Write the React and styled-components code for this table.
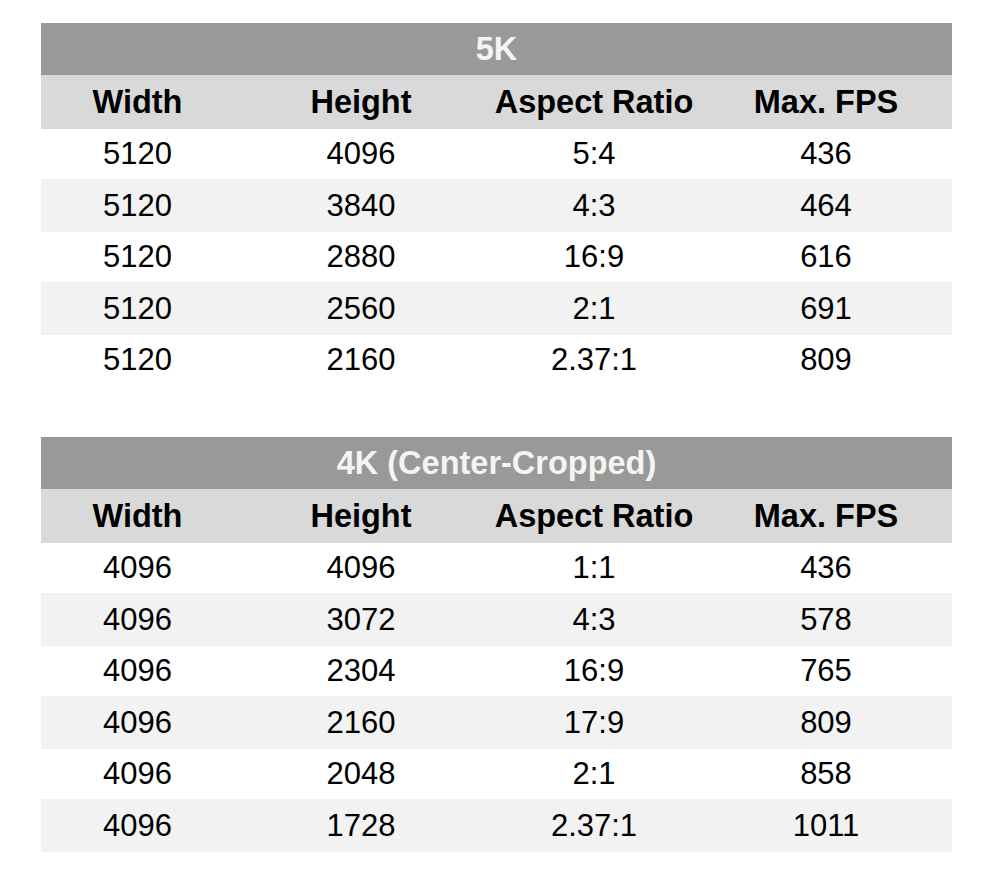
import React from "react";
import styled, { createGlobalStyle } from "styled-components";

const Global = createGlobalStyle`
  html, body { margin: 0; padding: 0; background: #ffffff; }
  body { font-family: "Liberation Sans", Arial, sans-serif; }
`;

const Page = styled.div`
  width: 984px;
  padding: 23px 0 0 41px;
  box-sizing: border-box;
  display: flex;
  flex-direction: column;
  gap: 52px;
`;

const Table = styled.div`
  width: 911px;
  display: grid;
  grid-template-columns: 193px 254px 212px 252px;
`;

const Title = styled.div`
  grid-column: 1 / -1;
  height: 52px;
  background: #999999;
  color: #f4f4f4;
  font-weight: 700;
  font-size: 32.5px;
  display: flex;
  align-items: center;
  justify-content: center;
`;

const Cell = styled.div`
  height: ${(p) => p.$h}px;
  background: ${(p) => p.$bg};
  color: #000;
  font-size: ${(p) => (p.$bold ? "32.5px" : "31px")};
  font-weight: ${(p) => (p.$bold ? 700 : 400)};
  display: flex;
  align-items: center;
  justify-content: center;
  white-space: nowrap;
`;

const headers = ["Width", "Height", "Aspect Ratio", "Max. FPS"];

const tables = [
  {
    title: "5K",
    rows: [
      ["5120", "4096", "5:4", "436"],
      ["5120", "3840", "4:3", "464"],
      ["5120", "2880", "16:9", "616"],
      ["5120", "2560", "2:1", "691"],
      ["5120", "2160", "2.37:1", "809"],
    ],
  },
  {
    title: "4K (Center-Cropped)",
    rows: [
      ["4096", "4096", "1:1", "436"],
      ["4096", "3072", "4:3", "578"],
      ["4096", "2304", "16:9", "765"],
      ["4096", "2160", "17:9", "809"],
      ["4096", "2048", "2:1", "858"],
      ["4096", "1728", "2.37:1", "1011"],
    ],
  },
];

function ResTable({ title, rows }) {
  return (
    <Table>
      <Title>{title}</Title>
      {headers.map((h) => (
        <Cell key={h} $h={54} $bg="#d9d9d9" $bold>
          {h}
        </Cell>
      ))}
      {rows.map((r, i) =>
        r.map((v, j) => (
          <Cell
            key={i + "-" + j}
            $h={i % 2 === 0 ? 50 : 53}
            $bg={i % 2 === 0 ? "#ffffff" : "#f2f2f2"}
          >
            {v}
          </Cell>
        ))
      )}
    </Table>
  );
}

export default function App() {
  return (
    <>
      <Global />
      <Page>
        {tables.map((t) => (
          <ResTable key={t.title} {...t} />
        ))}
      </Page>
    </>
  );
}
